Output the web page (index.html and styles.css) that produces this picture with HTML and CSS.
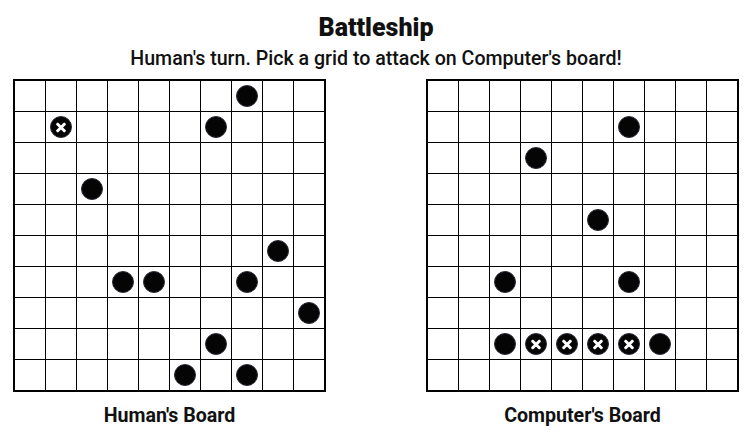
FILE: index.html
```html
<!DOCTYPE html>
<html>
<head>
<meta charset="utf-8">
<link rel="stylesheet" href="styles.css">
</head>
<body>
<div class="app">
  <h1 class="title">Battleship</h1>
  <p class="status">Human's turn. Pick a grid to attack on Computer's board!</p>
  <div class="boards">
    <div class="board-wrap">
      <div class="board" id="human"></div>
      <div class="label">Human's Board</div>
    </div>
    <div class="board-wrap">
      <div class="board" id="computer"></div>
      <div class="label">Computer's Board</div>
    </div>
  </div>
</div>
<script>
  function build(id, ships, hits) {
    var el = document.getElementById(id);
    for (var r = 0; r < 10; r++) {
      for (var c = 0; c < 10; c++) {
        var cell = document.createElement('div');
        cell.className = 'cell';
        var key = r + ',' + c;
        if (ships.indexOf(key) >= 0 || hits.indexOf(key) >= 0) {
          var p = document.createElement('span');
          p.className = hits.indexOf(key) >= 0 ? 'peg hit' : 'peg';
          cell.appendChild(p);
        }
        el.appendChild(cell);
      }
    }
  }
  build('human',
    ['0,7','1,6','3,2','5,8','6,3','6,4','6,7','7,9','8,6','9,5','9,7'],
    ['1,1']);
  build('computer',
    ['1,6','2,3','4,5','6,2','6,6','8,2','8,7'],
    ['8,3','8,4','8,5','8,6']);
</script>
</body>
</html>
```
FILE: styles.css
```css
html, body {
  margin: 0;
  padding: 0;
  background: #fff;
}
body {
  font-family: Roboto, "Liberation Sans", sans-serif;
  color: #111;
}
.app {
  display: flex;
  flex-direction: column;
  align-items: center;
  padding: 14px 0 0 7px;
}
.title {
  margin: 0;
  font-size: 25px;
  line-height: 28px;
  font-weight: 900;
}
.status {
  margin: 4px 0 0;
  font-size: 19.6px;
  line-height: 25px;
  font-weight: 500;
}
.boards {
  display: flex;
  gap: 100px;
  margin-top: 8px;
}
.board-wrap {
  display: flex;
  flex-direction: column;
  align-items: center;
}
.board {
  display: grid;
  grid-template-columns: repeat(10, 30px);
  grid-auto-rows: 30px;
  gap: 1px;
  background: #000;
  border: 2px solid #000;
}
.cell {
  background: #fff;
  display: flex;
  align-items: center;
  justify-content: center;
}
.peg {
  width: 22px;
  height: 22px;
  box-sizing: border-box;
  border-radius: 50%;
  background: #050505;
  border: 1px solid #2c2c38;
  position: relative;
}
.hit::before,
.hit::after {
  content: "";
  position: absolute;
  left: 50%;
  top: 50%;
  width: 12px;
  height: 3px;
  margin: -1.5px 0 0 -6px;
  background: #fff;
  border-radius: 1px;
  transform: rotate(45deg);
}
.hit::after {
  transform: rotate(-45deg);
}
.label {
  margin-top: 12px;
  font-size: 19.6px;
  line-height: 24px;
  font-weight: 700;
}
```
